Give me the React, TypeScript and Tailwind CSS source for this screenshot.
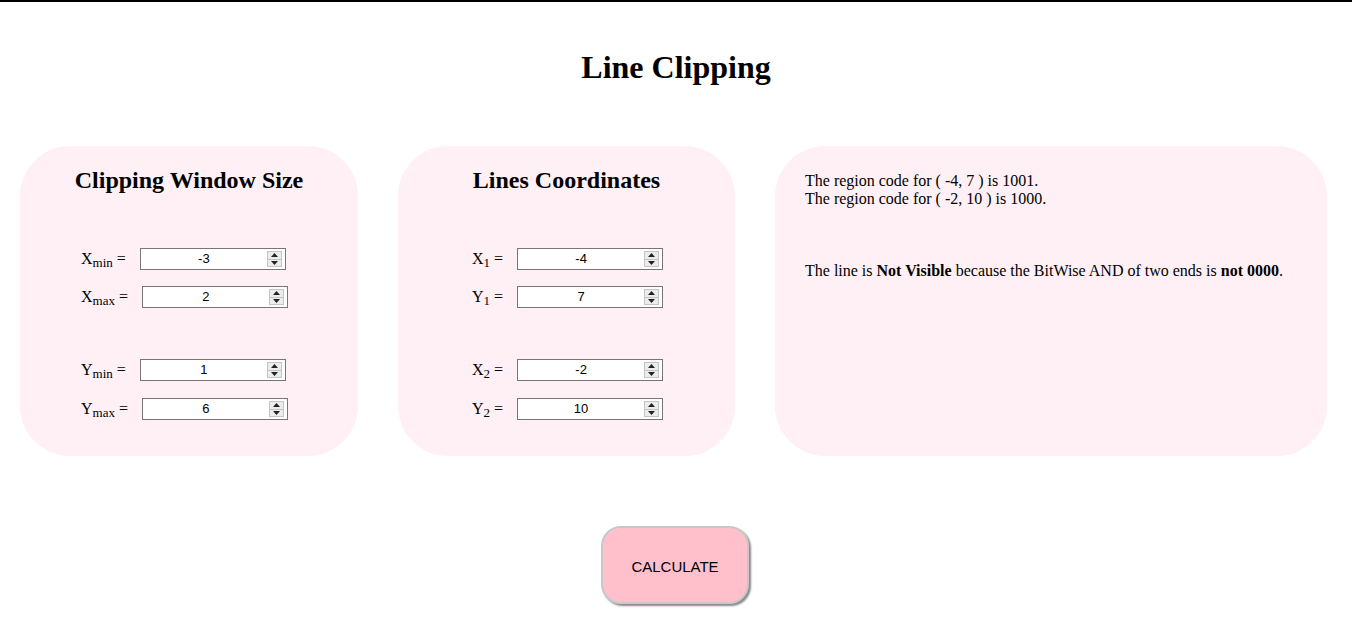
import React from 'react';

interface Field {
  base: string;
  sub: string;
  value: string;
}

const Spinner: React.FC = () => (
  <div className="absolute right-[3px] top-[2px] flex h-[16px] w-[15px] flex-col border border-[#c4c4c4] bg-[#ececec]">
    <div className="flex flex-1 items-center justify-center border-b border-[#c4c4c4]">
      <svg width="7" height="4" viewBox="0 0 7 4">
        <path d="M3.5 0 L7 4 L0 4 Z" fill="#222" />
      </svg>
    </div>
    <div className="flex flex-1 items-center justify-center">
      <svg width="7" height="4" viewBox="0 0 7 4">
        <path d="M0 0 L7 0 L3.5 4 Z" fill="#222" />
      </svg>
    </div>
  </div>
);

const NumberRow: React.FC<{ field: Field }> = ({ field }) => (
  <div className="flex items-center">
    <span className="text-[16px] leading-none">
      {field.base}
      <sub className="text-[13px]">{field.sub}</sub> =&nbsp;
    </span>
    <div className="relative ml-[10px] h-[22px] w-[146px] border border-[#767676] bg-white">
      <div className="flex h-full items-center justify-center pr-[18px] font-['Liberation_Sans',Arial,sans-serif] text-[13px]">
        {field.value}
      </div>
      <Spinner />
    </div>
  </div>
);

const Card: React.FC<{ title: string; fields: Field[]; width: string; pad: string }> = ({ title, fields, width, pad }) => (
  <div className={`${width} h-[310px] rounded-[50px] bg-[#fff0f5] pt-[19px]`}>
    <h2 className="text-center text-[24px] font-bold leading-[30px]">{title}</h2>
    <div className={`${pad} mt-[53px] flex flex-col gap-[16px]`}>
      <NumberRow field={fields[0]} />
      <NumberRow field={fields[1]} />
    </div>
    <div className={`${pad} mt-[51px] flex flex-col gap-[17px]`}>
      <NumberRow field={fields[2]} />
      <NumberRow field={fields[3]} />
    </div>
  </div>
);

export default function App() {
  const windowFields: Field[] = [
    { base: 'X', sub: 'min', value: '-3' },
    { base: 'X', sub: 'max', value: '2' },
    { base: 'Y', sub: 'min', value: '1' },
    { base: 'Y', sub: 'max', value: '6' },
  ];
  const lineFields: Field[] = [
    { base: 'X', sub: '1', value: '-4' },
    { base: 'Y', sub: '1', value: '7' },
    { base: 'X', sub: '2', value: '-2' },
    { base: 'Y', sub: '2', value: '10' },
  ];

  return (
    <div className="min-h-[634px] bg-white font-['Liberation_Serif','Times_New_Roman',serif] text-black">
      <div className="h-[2px] w-full bg-black" />
      <h1 className="pt-[47px] text-center text-[32px] font-bold leading-[37px]">Line Clipping</h1>

      <div className="mt-[60px] flex gap-[40px] pl-[20px]">
        <Card title="Clipping Window Size" fields={windowFields} width="w-[338px]" pad="pl-[61px]" />
        <Card title="Lines Coordinates" fields={lineFields} width="w-[337px]" pad="pl-[74px]" />
        <div className="h-[310px] w-[552px] rounded-[50px] bg-[#fff0f5] px-[30px] pt-[26px] text-[16px] leading-[18px]">
          <p>The region code for ( -4, 7 ) is 1001.</p>
          <p>The region code for ( -2, 10 ) is 1000.</p>
          <p className="mt-[54px]">
            The line is <b>Not Visible</b> because the BitWise AND of two ends is <b>not 0000</b>.
          </p>
        </div>
      </div>

      <div className="mt-[70px] flex justify-center pr-[2px]">
        <button className="h-[78px] w-[148px] rounded-[20px] border-2 border-[#c8c8c8] bg-[#ffc0cb] pt-[4px] font-['Liberation_Sans',Arial,sans-serif] text-[15px] text-black shadow-[2px_2px_2px_#8a8a8a]">
          CALCULATE
        </button>
      </div>
    </div>
  );
}
